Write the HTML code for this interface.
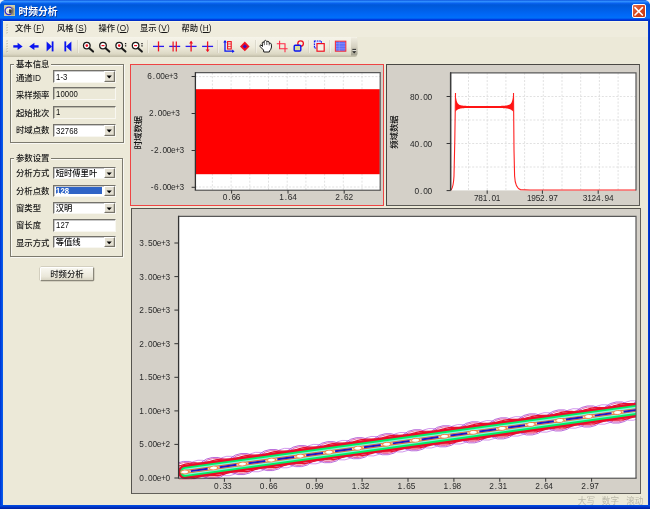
<!DOCTYPE html><html><head><meta charset="utf-8"><title>时频分析</title><style>
html,body{margin:0;padding:0;}
body{width:650px;height:509px;overflow:hidden;background:#ece9d8;position:relative;font-family:"Liberation Sans","Noto Sans CJK SC",sans-serif;font-size:8px;color:#1a1a1a;}
.a{position:absolute;}
.t{position:absolute;white-space:nowrap;line-height:10px;height:10px;}
#title{left:0;top:0;width:650px;height:21px;background:linear-gradient(to bottom,#1058e0 0px,#3090ff 1.6px,#0a62f0 3.2px,#0058d8 5px,#0060e8 10px,#0068f8 15px,#0070f8 18px,#0038e0 19.6px,#0030c8 20.5px);}
#lb{left:0;top:20px;width:3px;height:489px;background:linear-gradient(to right,#0030d0,#0050e8 60%,#1060e8);}
#rb{left:647.5px;top:20px;width:2.5px;height:489px;background:linear-gradient(to right,#0040e0,#0028b0);}
#bb{left:0;top:505.3px;width:650px;height:3.7px;background:linear-gradient(to bottom,#0050e8,#0030c0 60%,#001f9c);}
.lbl{font-size:8px;color:#151515;font-weight:500;}
.num{font-family:"Liberation Sans",sans-serif;color:#222;}
.panel{position:absolute;background:#d4d0c8;}
.combo{position:absolute;background:#fff;border:1.1px solid #74726b;border-right-color:#f8f7f1;border-bottom-color:#f8f7f1;box-sizing:border-box;box-shadow:inset 0.5px 0.5px 0 rgba(60,60,60,.55);}
.dd{position:absolute;right:0;top:0;bottom:0;width:11.4px;background:#e4e0d2;border:0.8px solid #fff;border-right-color:#77746a;border-bottom-color:#77746a;box-sizing:border-box;box-shadow:inset -0.6px -0.6px 0 #b5b2a5;}
.ro{background:#ece9d8;}
.grp{position:absolute;border:1px solid #7c7a6e;box-sizing:border-box;box-shadow:0.7px 0.7px 0 #fff, inset 0.7px 0.7px 0 #fff;}
.gt{position:absolute;background:#ece9d8;padding:0 1.5px;}
</style></head><body><div id="w" style="position:absolute;left:0;top:0;width:650px;height:509px;will-change:transform"><div class="a" id="title"></div>
<div class="a" style="left:0;top:20.5px;width:650px;height:1.5px;background:#f8f8e4"></div>
<div class="a" style="left:3px;top:22px;width:644.5px;height:15px;background:#efecdd"></div>
<div class="a" style="left:3px;top:37px;width:354px;height:19.5px;background:linear-gradient(to bottom,#f6f4ea 0,#eeebdc 50%,#dcd8c4 85%,#bfbba6 100%);border-radius:0 0 2px 0"></div>
<div class="a" id="lb"></div><div class="a" id="rb"></div><div class="a" id="bb"></div>
<svg class="a" style="left:0;top:0" width="650" height="8"><path d="M0 0h4.5C2 0.8 0.8 2 0 4.5z" fill="#e8eef8"/><path d="M650 0h-4.5c2.5 .8 3.7 2 4.5 4.5z" fill="#e8eef8"/></svg>
<svg class="a" style="left:3.7px;top:5px" width="11.3" height="11.2" viewBox="0 0 13 13"><rect x="0" y="0" width="13" height="13" rx="1" fill="#d8d3b0"/><rect x="0.5" y="0.5" width="12" height="12" fill="#cfc9a4"/><circle cx="5.6" cy="6.8" r="4.4" fill="#f4f0d0" stroke="#2a28d8" stroke-width="1.5"/><circle cx="7" cy="7.4" r="2.6" fill="#3a3a48"/><path d="M5 3.4 L5.4 9.6" stroke="#fff" stroke-width="1"/><path d="M9 2 L12 4 L12 12 L8 12" fill="#8a8460" opacity=".7"/></svg>
<div class="t" style="left:18.6px;top:6px;font-size:9.8px;font-weight:700;color:#fff;line-height:11px;height:11px;letter-spacing:-0.1px;text-shadow:0.6px 0.6px 0.5px #0a2a80">时频分析</div>
<div class="a" style="left:632px;top:4px;width:13.5px;height:14px;border-radius:2px;background:linear-gradient(135deg,#e8704c,#d8461c 50%,#c03a12);border:0.8px solid #fff;box-sizing:border-box"></div>
<svg class="a" style="left:632px;top:4px" width="14" height="14"><path d="M3 3.6 L10.4 11 M10.4 3.6 L3 11" stroke="#fff" stroke-width="1.6" stroke-linecap="round"/></svg>
<svg class="a" style="left:0;top:0" width="20" height="60"><rect x="6.5" y="24.5" width="1.3" height="1.3" fill="#b8b4a0"/><rect x="7.4" y="25.4" width="0.8" height="0.8" fill="#fff"/><rect x="6.5" y="27.1" width="1.3" height="1.3" fill="#b8b4a0"/><rect x="7.4" y="28.0" width="0.8" height="0.8" fill="#fff"/><rect x="6.5" y="29.7" width="1.3" height="1.3" fill="#b8b4a0"/><rect x="7.4" y="30.6" width="0.8" height="0.8" fill="#fff"/><rect x="6.5" y="32.3" width="1.3" height="1.3" fill="#b8b4a0"/><rect x="7.4" y="33.2" width="0.8" height="0.8" fill="#fff"/><rect x="6.5" y="40.5" width="1.3" height="1.3" fill="#b8b4a0"/><rect x="7.4" y="41.4" width="0.8" height="0.8" fill="#fff"/><rect x="6.5" y="43.1" width="1.3" height="1.3" fill="#b8b4a0"/><rect x="7.4" y="44.0" width="0.8" height="0.8" fill="#fff"/><rect x="6.5" y="45.7" width="1.3" height="1.3" fill="#b8b4a0"/><rect x="7.4" y="46.6" width="0.8" height="0.8" fill="#fff"/><rect x="6.5" y="48.3" width="1.3" height="1.3" fill="#b8b4a0"/><rect x="7.4" y="49.2" width="0.8" height="0.8" fill="#fff"/><rect x="6.5" y="50.9" width="1.3" height="1.3" fill="#b8b4a0"/><rect x="7.4" y="51.8" width="0.8" height="0.8" fill="#fff"/></svg>
<div class="t lbl" style="left:15px;top:23.3px;font-size:8.3px"><span>文件</span><span style="font-size:8.2px;letter-spacing:0.25px;margin-left:1.6px">(<u>F</u>)</span></div>
<div class="t lbl" style="left:57px;top:23.3px;font-size:8.3px"><span>风格</span><span style="font-size:8.2px;letter-spacing:0.25px;margin-left:1.6px">(<u>S</u>)</span></div>
<div class="t lbl" style="left:98.5px;top:23.3px;font-size:8.3px"><span>操作</span><span style="font-size:8.2px;letter-spacing:0.25px;margin-left:1.6px">(<u>O</u>)</span></div>
<div class="t lbl" style="left:140px;top:23.3px;font-size:8.3px"><span>显示</span><span style="font-size:8.2px;letter-spacing:0.25px;margin-left:1.6px">(<u>V</u>)</span></div>
<div class="t lbl" style="left:181.5px;top:23.3px;font-size:8.3px"><span>帮助</span><span style="font-size:8.2px;letter-spacing:0.25px;margin-left:1.6px">(<u>H</u>)</span></div>
<svg class="a" style="left:0;top:0" width="365" height="60"><path d="M13.3 46.4 H19" stroke="#0a14f0" stroke-width="2.4"/><path d="M17.6 42.8 L22.6 46.4 L17.6 50.0 z" fill="#0a14f0"/><path d="M38.6 46.4 H33" stroke="#0a14f0" stroke-width="2.4"/><path d="M34.4 42.8 L29.2 46.4 L34.4 50.0 z" fill="#0a14f0"/><path d="M46.6 41.4 L52 46.4 L46.6 51.4 z" fill="#0a14f0"/><path d="M52.6 41.4 V51.4" stroke="#0a14f0" stroke-width="1.8"/><path d="M71.4 41.4 L66 46.4 L71.4 51.4 z" fill="#0a14f0"/><path d="M65.3 41.4 V51.4" stroke="#0a14f0" stroke-width="1.8"/><path d="M77.7 40 V53" stroke="#cfccbc" stroke-width="0.8"/><path d="M78.4 40 V53" stroke="#fbfaf4" stroke-width="0.6"/><circle cx="86.8" cy="45.6" r="3.3" fill="#fff" stroke="#1a1a1a" stroke-width="1.3"/><path d="M89.4 48.2 L93.1 51.6" stroke="#1a1a1a" stroke-width="2" stroke-linecap="round"/><circle cx="86.8" cy="45.6" r="1.3" fill="#f01020"/><circle cx="103.0" cy="45.6" r="3.3" fill="#fff" stroke="#1a1a1a" stroke-width="1.3"/><path d="M105.6 48.2 L109.3 51.6" stroke="#1a1a1a" stroke-width="2" stroke-linecap="round"/><path d="M101.5 45.6 h3" stroke="#f01020" stroke-width="1.2"/><circle cx="119.2" cy="45.6" r="3.3" fill="#fff" stroke="#1a1a1a" stroke-width="1.3"/><path d="M121.8 48.2 L125.5 51.6" stroke="#1a1a1a" stroke-width="2" stroke-linecap="round"/><circle cx="119.2" cy="45.6" r="1.3" fill="#f01020"/><path d="M125.6 43 v1.3 M125.6 45.3 v1.3" stroke="#1a1a1a" stroke-width="1.3"/><circle cx="135.6" cy="45.6" r="3.3" fill="#fff" stroke="#1a1a1a" stroke-width="1.3"/><path d="M138.2 48.2 L141.9 51.6" stroke="#1a1a1a" stroke-width="2" stroke-linecap="round"/><path d="M134.1 45.6 h3" stroke="#f01020" stroke-width="1.2"/><path d="M142.0 43 v1.3 M142.0 45.3 v1.3" stroke="#1a1a1a" stroke-width="1.3"/><path d="M147.8 40 V53" stroke="#cfccbc" stroke-width="0.8"/><path d="M148.5 40 V53" stroke="#fbfaf4" stroke-width="0.6"/><path d="M153.0 46.4 h11" stroke="#2a1af0" stroke-width="1.3"/><path d="M158.5 41.4 v10" stroke="#f01020" stroke-width="1.3"/><path d="M169.2 46.4 h11" stroke="#2a1af0" stroke-width="1.3"/><path d="M173.1 41.4 v10 M176.3 41.4 v10" stroke="#f01020" stroke-width="1.2"/><path d="M185.6 46.4 h11" stroke="#2a1af0" stroke-width="1.3"/><path d="M191.1 41.4 v10" stroke="#f01020" stroke-width="1.3"/><path d="M191.1 40.8 l2 2.6 h-4 z" fill="#f01020"/><path d="M202.1 46.4 h11" stroke="#2a1af0" stroke-width="1.3"/><path d="M207.6 41.4 v10" stroke="#f01020" stroke-width="1.3"/><path d="M207.6 52.0 l2 -2.6 h-4 z" fill="#f01020"/><path d="M217.8 40 V53" stroke="#cfccbc" stroke-width="0.8"/><path d="M218.5 40 V53" stroke="#fbfaf4" stroke-width="0.6"/><path d="M225 41.5 V51.2 H233" fill="none" stroke="#0a14f0" stroke-width="1.3"/><path d="M225 40 l1.8 2.4 h-3.6z M234.6 51.2 l-2.4 1.8 v-3.6z" fill="#0a14f0"/><rect x="227.6" y="41.6" width="3.6" height="7.4" fill="none" stroke="#f01020" stroke-width="1.1"/><path d="M227.6 44 h3.6 M227.6 46.5 h3.6" stroke="#f01020" stroke-width=".7"/><path d="M244.8 41.6 L249.6 46.4 L244.8 51.2 L240 46.4 z" fill="#f01020"/><path d="M244.8 44.2 L247 46.4 L244.8 48.6 L242.6 46.4 z" fill="#3a10c0"/><path d="M255.5 40 V53" stroke="#cfccbc" stroke-width="0.8"/><path d="M256.2 40 V53" stroke="#fbfaf4" stroke-width="0.6"/><path d="M263.8 52 L263.5 50 L260.2 46.7 Q259.4 45.2 260.9 44.9 L262.5 46.5 L262.2 42.7 Q262.9 41.3 263.9 42.4 L264.3 41 Q265.4 39.7 266.5 41 L266.9 41.7 Q267.9 40.6 268.9 41.9 L269.4 43.3 Q270.7 42.6 271.3 44.1 L271.5 47 Q271.1 49.6 269.5 51 L269.3 52 Z" fill="#fff" stroke="#1a1a1a" stroke-width="1" stroke-linejoin="round"/><path d="M264.3 42 V45.2 M266.8 41.8 V45 M269.2 43 V45.4" stroke="#1a1a1a" stroke-width=".7"/><path d="M279.6 40.8 V48.8 H287.6 M276.8 43.8 H285 V52.2" fill="none" stroke="#ff2848" stroke-width="1.1"/><circle cx="300.6" cy="43.6" r="2.8" fill="none" stroke="#f01020" stroke-width="1.3"/><rect x="294.2" y="45.2" width="6.6" height="5.8" rx="1" fill="#d8dca0" stroke="#0a14f0" stroke-width="1.4"/><path d="M308.6 40 V53" stroke="#cfccbc" stroke-width="0.8"/><path d="M309.3 40 V53" stroke="#fbfaf4" stroke-width="0.6"/><rect x="314.4" y="41" width="7" height="7" fill="#dfe4ff" stroke="#0a14f0" stroke-width="1.1" stroke-dasharray="1.6 0.8"/><rect x="317" y="43.6" width="7.2" height="7.6" fill="#f4f2e8" stroke="#f01020" stroke-width="1.2"/><path d="M329.8 40 V53" stroke="#cfccbc" stroke-width="0.8"/><path d="M330.5 40 V53" stroke="#fbfaf4" stroke-width="0.6"/><rect x="335.4" y="41.2" width="10.4" height="10" fill="#7f8cff" stroke="#f23040" stroke-width="1.1"/><path d="M336 43.6 h9.2 M336 46.2 h9.2 M336 48.8 h9.2" stroke="#dfe3ff" stroke-width=".6"/><path d="M339.2 41.8 v8.8" stroke="#e8ebff" stroke-width=".6"/><rect x="336.2" y="42" width="8.8" height="8.4" fill="#3a48f0" opacity=".45"/><defs><linearGradient id="cg" x1="0" y1="0" x2="0" y2="1"><stop offset="0" stop-color="#efece0"/><stop offset=".5" stop-color="#d6d2c2"/><stop offset="1" stop-color="#a29f8e"/></linearGradient></defs><path d="M351 37.5 H355.5 Q357.6 37.5 357.6 39.6 V53.4 Q357.6 55.6 355.5 55.6 H351 Z" fill="url(#cg)"/><path d="M352.4 49.4 h3.6" stroke="#222" stroke-width="1"/><path d="M352.8 50.4 h3.6" stroke="#fff" stroke-width=".6"/><path d="M352.2 51.2 h4 l-2 2.3z" fill="#222"/></svg>
<div class="grp" style="left:10.2px;top:64.4px;width:113.4px;height:78.2px"></div>
<div class="t lbl gt" style="left:14.4px;top:59.2px;font-size:8.4px">基本信息</div>
<div class="grp" style="left:10.2px;top:158.2px;width:113.2px;height:98.5px"></div>
<div class="t lbl gt" style="left:14.4px;top:153.0px;font-size:8.4px">参数设置</div>
<div class="t lbl" style="left:16.0px;top:73.0px;font-size:8.4px">通道ID</div>
<div class="combo" style="left:53.4px;top:70.4px;width:62.6px;height:12.4px"><div class="t" style="left:1.3px;top:0.2px;font-size:9px;font-weight:500;transform:scaleX(.86);transform-origin:0 50%;letter-spacing:0.1px;color:#0c0c0c">1-3</div><div class="dd"><svg style="position:absolute;left:0;top:0" width="10" height="10.2" viewBox="0 0 10 10.2"><path d="M1.6 3.60 h5.2 l-2.6 2.8z" fill="#000"/></svg></div></div>
<div class="t lbl" style="left:16.0px;top:90.4px;font-size:8.4px">采样频率</div>
<div class="combo ro" style="left:53.4px;top:87.4px;width:62.6px;height:13.0px"><div class="t" style="left:1.3px;top:0.5px;font-size:9px;font-weight:500;transform:scaleX(.86);transform-origin:0 50%;letter-spacing:0.1px;color:#0c0c0c">10000</div></div>
<div class="t lbl" style="left:16.0px;top:108.0px;font-size:8.4px">起始批次</div>
<div class="combo ro" style="left:53.4px;top:105.8px;width:62.6px;height:13.0px"><div class="t" style="left:1.3px;top:0.5px;font-size:9px;font-weight:500;transform:scaleX(.86);transform-origin:0 50%;letter-spacing:0.1px;color:#0c0c0c">1</div></div>
<div class="t lbl" style="left:16.0px;top:125.4px;font-size:8.4px">时域点数</div>
<div class="combo" style="left:53.4px;top:124.4px;width:62.6px;height:12.4px"><div class="t" style="left:1.3px;top:0.2px;font-size:9px;font-weight:500;transform:scaleX(.86);transform-origin:0 50%;letter-spacing:0.1px;color:#0c0c0c">32768</div><div class="dd"><svg style="position:absolute;left:0;top:0" width="10" height="10.2" viewBox="0 0 10 10.2"><path d="M1.6 3.60 h5.2 l-2.6 2.8z" fill="#000"/></svg></div></div>
<div class="t lbl" style="left:16.0px;top:168.4px;font-size:8.4px">分析方式</div>
<div class="combo" style="left:53.4px;top:167.2px;width:62.6px;height:12.1px"><div class="t" style="left:1.3px;top:0.3px;font-size:8.3px;font-weight:500;color:#0c0c0c">短时傅里叶</div><div class="dd"><svg style="position:absolute;left:0;top:0" width="10" height="9.9" viewBox="0 0 10 9.9"><path d="M1.6 3.45 h5.2 l-2.6 2.8z" fill="#000"/></svg></div></div>
<div class="t lbl" style="left:16.0px;top:185.6px;font-size:8.4px">分析点数</div>
<div class="combo" style="left:53.4px;top:184.5px;width:62.6px;height:12.1px"><div class="a" style="left:1.2px;top:1.4px;width:46.6px;bottom:1.2px;background:#2f64c6"></div><div class="t" style="left:1.3px;top:0.0px;font-size:9px;font-weight:700;transform:scaleX(.86);transform-origin:0 50%;letter-spacing:0.1px;color:#fff">128</div><div class="dd"><svg style="position:absolute;left:0;top:0" width="10" height="9.9" viewBox="0 0 10 9.9"><path d="M1.6 3.45 h5.2 l-2.6 2.8z" fill="#000"/></svg></div></div>
<div class="t lbl" style="left:16.0px;top:203.0px;font-size:8.4px">窗类型</div>
<div class="combo" style="left:53.4px;top:201.9px;width:62.6px;height:12.1px"><div class="t" style="left:1.3px;top:0.2px;font-size:8.3px;font-weight:500;color:#0c0c0c">汉明</div><div class="dd"><svg style="position:absolute;left:0;top:0" width="10" height="9.9" viewBox="0 0 10 9.9"><path d="M1.6 3.45 h5.2 l-2.6 2.8z" fill="#000"/></svg></div></div>
<div class="t lbl" style="left:16.0px;top:220.4px;font-size:8.4px">窗长度</div>
<div class="combo" style="left:53.4px;top:219.2px;width:62.6px;height:12.4px"><div class="t" style="left:1.3px;top:0.2px;font-size:9px;font-weight:500;transform:scaleX(.86);transform-origin:0 50%;letter-spacing:0.1px;color:#0c0c0c">127</div></div>
<div class="t lbl" style="left:16.0px;top:237.6px;font-size:8.4px">显示方式</div>
<div class="combo" style="left:53.4px;top:236.2px;width:62.6px;height:12.1px"><div class="t" style="left:1.3px;top:0.3px;font-size:8.3px;font-weight:500;color:#0c0c0c">等值线</div><div class="dd"><svg style="position:absolute;left:0;top:0" width="10" height="9.9" viewBox="0 0 10 9.9"><path d="M1.6 3.45 h5.2 l-2.6 2.8z" fill="#000"/></svg></div></div>
<div class="a" style="left:39.8px;top:266.8px;width:54.4px;height:13.8px;box-sizing:border-box;border:0.8px solid #fff;border-right-color:#8a877a;border-bottom-color:#8a877a;border-radius:1.5px;background:linear-gradient(#f8f7f0,#ebe8da 70%,#d9d5c4);box-shadow:0 0 0 0.5px #b9b6a6"></div>
<div class="t lbl" style="left:39.8px;width:54.4px;text-align:center;top:268.6px;font-size:8.4px">时频分析</div>
<div class="t" style="left:577.8px;top:495.6px;font-size:8.6px;color:#b9b7a8;word-spacing:0">大写</div>
<div class="t" style="left:601.8px;top:495.6px;font-size:8.6px;color:#b9b7a8">数字</div>
<div class="t" style="left:626.2px;top:495.6px;font-size:8.6px;color:#b9b7a8">滚动</div>
<div class="panel" style="left:130.4px;top:64.3px;width:253.8px;height:141.6px;box-sizing:border-box;border:1.1px solid #ee4444"></div>
<div class="panel" style="left:385.8px;top:64.1px;width:254.6px;height:142.2px;box-sizing:border-box;border:1.4px solid #4a4844;border-right-color:#5c5a55;border-bottom-color:#5c5a55"></div>
<div class="panel" style="left:130.6px;top:207.6px;width:510.5px;height:286.4px;box-sizing:border-box;border:1.5px solid #55534e;border-right-color:#62605a;border-bottom-color:#62605a"></div>
<svg class="a" style="left:0;top:0;font-family:'Liberation Sans','Noto Sans CJK SC',sans-serif" width="650" height="509"><rect x="195.4" y="72.7" width="184.8" height="117.5" fill="#fff"/><path d="M212.4 72.7 V190.2" stroke="#d9d9d9" stroke-width="0.8" stroke-dasharray="2 1.6"/><path d="M231.1 72.7 V190.2" stroke="#d9d9d9" stroke-width="0.8" stroke-dasharray="2 1.6"/><path d="M249.8 72.7 V190.2" stroke="#d9d9d9" stroke-width="0.8" stroke-dasharray="2 1.6"/><path d="M268.5 72.7 V190.2" stroke="#d9d9d9" stroke-width="0.8" stroke-dasharray="2 1.6"/><path d="M287.2 72.7 V190.2" stroke="#d9d9d9" stroke-width="0.8" stroke-dasharray="2 1.6"/><path d="M305.9 72.7 V190.2" stroke="#d9d9d9" stroke-width="0.8" stroke-dasharray="2 1.6"/><path d="M324.6 72.7 V190.2" stroke="#d9d9d9" stroke-width="0.8" stroke-dasharray="2 1.6"/><path d="M343.3 72.7 V190.2" stroke="#d9d9d9" stroke-width="0.8" stroke-dasharray="2 1.6"/><path d="M362.0 72.7 V190.2" stroke="#d9d9d9" stroke-width="0.8" stroke-dasharray="2 1.6"/><path d="M195.4 76.6 H380.2" stroke="#d9d9d9" stroke-width="0.8" stroke-dasharray="2 1.6"/><path d="M195.4 187.0 H380.2" stroke="#d9d9d9" stroke-width="0.8" stroke-dasharray="2 1.6"/><rect x="195.8" y="89.2" width="184.0" height="85" fill="#ff0000"/><path d="M195.4 72.7 H380.2 V190.2" fill="none" stroke="#585858" stroke-width="1.2"/><path d="M195.4 190.2 V72.1" fill="none" stroke="#333" stroke-width="1.3"/><path d="M194.8 190.2 H380.8" stroke="#3c3c3c" stroke-width="1"/><text x="149.57 153.91 158.26 162.60 166.94 171.29 175.63" y="79.0" text-anchor="middle" font-size="8.3" fill="#2a2a2a">6.00e+3</text><path d="M191.6 76.5 H195.4" stroke="#333" stroke-width="1"/><text x="151.39 155.76 160.13 164.50 168.87 173.24 177.61" y="116.0" text-anchor="middle" font-size="8.3" fill="#2a2a2a">2.00e+3</text><path d="M191.6 113.5 H195.4" stroke="#333" stroke-width="1"/><text x="152.12 156.38 160.62 164.88 169.12 173.38 177.62 181.88" y="153.0" text-anchor="middle" font-size="8.3" fill="#2a2a2a">-2.00e+3</text><path d="M191.6 150.5 H195.4" stroke="#333" stroke-width="1"/><text x="152.11 156.34 160.56 164.79 169.01 173.24 177.46 181.69" y="189.8" text-anchor="middle" font-size="8.3" fill="#2a2a2a">-6.00e+3</text><path d="M191.6 187.3 H195.4" stroke="#333" stroke-width="1"/><text x="225.06 229.42 233.78 238.14" y="200.0" text-anchor="middle" font-size="8.3" fill="#2a2a2a">0.66</text><path d="M231.6 190.2 V193.6" stroke="#333" stroke-width="1"/><text x="281.46 285.82 290.18 294.54" y="200.0" text-anchor="middle" font-size="8.3" fill="#2a2a2a">1.64</text><path d="M288.0 190.2 V193.6" stroke="#333" stroke-width="1"/><text x="337.66 342.02 346.38 350.74" y="200.0" text-anchor="middle" font-size="8.3" fill="#2a2a2a">2.62</text><path d="M344.2 190.2 V193.6" stroke="#333" stroke-width="1"/><text transform="translate(141.4,132.6) rotate(-90)" text-anchor="middle" font-size="8.4" font-weight="500" fill="#111">时域数据</text><rect x="450.6" y="72.8" width="185.4" height="117.6" fill="#fff"/><path d="M468.5 72.8 V190.4" stroke="#d9d9d9" stroke-width="0.8" stroke-dasharray="2 1.6"/><path d="M487.2 72.8 V190.4" stroke="#d9d9d9" stroke-width="0.8" stroke-dasharray="2 1.6"/><path d="M505.9 72.8 V190.4" stroke="#d9d9d9" stroke-width="0.8" stroke-dasharray="2 1.6"/><path d="M524.6 72.8 V190.4" stroke="#d9d9d9" stroke-width="0.8" stroke-dasharray="2 1.6"/><path d="M543.3 72.8 V190.4" stroke="#d9d9d9" stroke-width="0.8" stroke-dasharray="2 1.6"/><path d="M562.0 72.8 V190.4" stroke="#d9d9d9" stroke-width="0.8" stroke-dasharray="2 1.6"/><path d="M580.7 72.8 V190.4" stroke="#d9d9d9" stroke-width="0.8" stroke-dasharray="2 1.6"/><path d="M599.4 72.8 V190.4" stroke="#d9d9d9" stroke-width="0.8" stroke-dasharray="2 1.6"/><path d="M618.1 72.8 V190.4" stroke="#d9d9d9" stroke-width="0.8" stroke-dasharray="2 1.6"/><path d="M450.6 96.5 H636.0" stroke="#d9d9d9" stroke-width="0.8" stroke-dasharray="2 1.6"/><path d="M450.6 120.0 H636.0" stroke="#d9d9d9" stroke-width="0.8" stroke-dasharray="2 1.6"/><path d="M450.6 143.5 H636.0" stroke="#d9d9d9" stroke-width="0.8" stroke-dasharray="2 1.6"/><path d="M450.6 167.0 H636.0" stroke="#d9d9d9" stroke-width="0.8" stroke-dasharray="2 1.6"/><path d="M455.40 92.20 L455.65 94.73 L455.90 96.73 L456.15 98.33 L456.40 99.61 L456.65 100.64 L456.90 101.47 L457.15 102.14 L457.40 102.69 L457.65 103.14 L457.90 103.51 L458.15 103.82 L458.40 104.08 L458.65 104.30 L458.90 104.49 L459.15 104.64 L459.40 104.78 L459.65 104.90 L459.90 105.00 L460.15 105.10 L460.40 105.18 L460.65 105.25 L460.90 105.31 L461.15 105.37 L461.40 105.42 L461.65 105.47 L461.90 105.51 L462.15 105.55 L462.40 105.59 L462.65 105.62 L462.90 105.65 L463.15 105.68 L463.40 105.70 L463.65 105.72 L463.90 105.75 L464.15 105.76 L464.40 105.78 L464.65 105.80 L464.90 105.81 L465.15 105.83 L465.40 105.84 L465.65 105.85 L465.90 105.86 L466.15 105.87 L466.40 105.88 L466.65 105.89 L466.90 105.90 L467.15 105.91 L467.40 105.92 L467.65 105.92 L467.90 105.93 L468.15 105.93 L468.40 105.94 L468.65 105.94 L468.90 105.95 L469.15 105.95 L469.40 105.95 L469.65 105.96 L469.90 105.96 L470.15 105.96 L470.40 105.97 L470.65 105.97 L470.90 105.97 L471.15 105.97 L471.40 105.98 L471.65 105.98 L471.90 105.98 L472.15 105.98 L472.40 105.98 L472.65 105.98 L472.90 105.98 L473.15 105.99 L473.40 105.99 L473.65 105.99 L473.90 105.99 L474.15 105.99 L474.40 105.99 L474.65 105.99 L474.90 105.99 L475.15 105.99 L475.40 105.99 L475.65 105.99 L475.90 105.99 L476.15 105.99 L476.40 105.99 L476.65 106.00 L476.90 106.00 L477.15 106.00 L477.40 106.00 L477.65 106.00 L477.90 106.00 L478.15 106.00 L478.40 106.00 L478.65 106.00 L478.90 106.00 L479.15 106.00 L479.40 106.00 L479.65 106.00 L479.90 106.00 L480.15 106.00 L480.40 106.00 L480.65 106.00 L480.90 106.00 L481.15 106.00 L481.40 106.00 L481.65 106.00 L481.90 106.00 L482.15 106.00 L482.40 106.00 L482.65 106.00 L482.90 106.00 L483.15 106.00 L483.40 106.00 L483.65 106.00 L483.90 106.00 L484.15 106.00 L484.40 106.00 L484.65 106.00 L484.90 106.00 L485.15 106.00 L485.40 106.00 L485.65 106.00 L485.90 106.00 L486.15 106.00 L486.40 106.00 L486.65 106.00 L486.90 106.00 L487.15 106.00 L487.40 106.00 L487.65 106.00 L487.90 106.00 L488.15 106.00 L488.40 106.00 L488.65 106.00 L488.90 106.00 L489.15 106.00 L489.40 106.00 L489.65 106.00 L489.90 105.99 L490.15 105.99 L490.40 105.99 L490.65 105.99 L490.90 105.99 L491.15 105.99 L491.40 105.99 L491.65 105.99 L491.90 105.99 L492.15 105.99 L492.40 105.99 L492.65 105.99 L492.90 105.99 L493.15 105.99 L493.40 105.99 L493.65 105.99 L493.90 105.98 L494.15 105.98 L494.40 105.98 L494.65 105.98 L494.90 105.98 L495.15 105.98 L495.40 105.98 L495.65 105.97 L495.90 105.97 L496.15 105.97 L496.40 105.97 L496.65 105.97 L496.90 105.96 L497.15 105.96 L497.40 105.96 L497.65 105.95 L497.90 105.95 L498.15 105.95 L498.40 105.94 L498.65 105.94 L498.90 105.94 L499.15 105.93 L499.40 105.93 L499.65 105.92 L499.90 105.92 L500.15 105.91 L500.40 105.90 L500.65 105.90 L500.90 105.89 L501.15 105.88 L501.40 105.87 L501.65 105.86 L501.90 105.85 L502.15 105.84 L502.40 105.83 L502.65 105.82 L502.90 105.81 L503.15 105.79 L503.40 105.78 L503.65 105.76 L503.90 105.74 L504.15 105.72 L504.40 105.70 L504.65 105.68 L504.90 105.66 L505.15 105.63 L505.40 105.61 L505.65 105.58 L505.90 105.55 L506.15 105.51 L506.40 105.48 L506.65 105.44 L506.90 105.39 L507.15 105.35 L507.40 105.30 L507.65 105.24 L507.90 105.18 L508.15 105.11 L508.40 105.04 L508.65 104.96 L508.90 104.86 L509.15 104.76 L509.40 104.64 L509.65 104.51 L509.90 104.35 L510.15 104.17 L510.40 103.96 L510.65 103.72 L510.90 103.43 L511.15 103.07 L511.40 102.65 L511.65 102.14 L511.90 101.51 L512.15 100.74 L512.40 99.78 L512.65 98.60 L512.90 97.11 L513.15 95.25 L513.40 92.91 L513.40 111.93 L513.15 111.61 L512.90 111.33 L512.65 111.06 L512.40 110.82 L512.15 110.59 L511.90 110.38 L511.65 110.19 L511.40 110.02 L511.15 109.86 L510.90 109.71 L510.65 109.57 L510.40 109.45 L510.15 109.33 L509.90 109.22 L509.65 109.13 L509.40 109.04 L509.15 108.95 L508.90 108.88 L508.65 108.81 L508.40 108.74 L508.15 108.68 L507.90 108.63 L507.65 108.58 L507.40 108.53 L507.15 108.49 L506.90 108.45 L506.65 108.41 L506.40 108.38 L506.15 108.35 L505.90 108.32 L505.65 108.30 L505.40 108.27 L505.15 108.25 L504.90 108.23 L504.65 108.21 L504.40 108.20 L504.15 108.18 L503.90 108.17 L503.65 108.15 L503.40 108.14 L503.15 108.13 L502.90 108.12 L502.65 108.11 L502.40 108.10 L502.15 108.09 L501.90 108.09 L501.65 108.08 L501.40 108.07 L501.15 108.07 L500.90 108.06 L500.65 108.06 L500.40 108.05 L500.15 108.05 L499.90 108.04 L499.65 108.04 L499.40 108.04 L499.15 108.03 L498.90 108.03 L498.65 108.03 L498.40 108.03 L498.15 108.02 L497.90 108.02 L497.65 108.02 L497.40 108.02 L497.15 108.02 L496.90 108.02 L496.65 108.01 L496.40 108.01 L496.15 108.01 L495.90 108.01 L495.65 108.01 L495.40 108.01 L495.15 108.01 L494.90 108.01 L494.65 108.01 L494.40 108.01 L494.15 108.01 L493.90 108.01 L493.65 108.01 L493.40 108.01 L493.15 108.00 L492.90 108.00 L492.65 108.00 L492.40 108.00 L492.15 108.00 L491.90 108.00 L491.65 108.00 L491.40 108.00 L491.15 108.00 L490.90 108.00 L490.65 108.00 L490.40 108.00 L490.15 108.00 L489.90 108.00 L489.65 108.00 L489.40 108.00 L489.15 108.00 L488.90 108.00 L488.65 108.00 L488.40 108.00 L488.15 108.00 L487.90 108.00 L487.65 108.00 L487.40 108.00 L487.15 108.00 L486.90 108.00 L486.65 108.00 L486.40 108.00 L486.15 108.00 L485.90 108.00 L485.65 108.00 L485.40 108.00 L485.15 108.00 L484.90 108.00 L484.65 108.00 L484.40 108.00 L484.15 108.00 L483.90 108.00 L483.65 108.00 L483.40 108.00 L483.15 108.00 L482.90 108.00 L482.65 108.00 L482.40 108.00 L482.15 108.00 L481.90 108.00 L481.65 108.00 L481.40 108.00 L481.15 108.00 L480.90 108.00 L480.65 108.00 L480.40 108.00 L480.15 108.00 L479.90 108.00 L479.65 108.00 L479.40 108.00 L479.15 108.00 L478.90 108.00 L478.65 108.00 L478.40 108.00 L478.15 108.00 L477.90 108.00 L477.65 108.00 L477.40 108.00 L477.15 108.00 L476.90 108.00 L476.65 108.00 L476.40 108.00 L476.15 108.00 L475.90 108.00 L475.65 108.00 L475.40 108.00 L475.15 108.00 L474.90 108.00 L474.65 108.00 L474.40 108.00 L474.15 108.00 L473.90 108.00 L473.65 108.00 L473.40 108.00 L473.15 108.00 L472.90 108.00 L472.65 108.00 L472.40 108.01 L472.15 108.01 L471.90 108.01 L471.65 108.01 L471.40 108.01 L471.15 108.01 L470.90 108.01 L470.65 108.01 L470.40 108.01 L470.15 108.01 L469.90 108.01 L469.65 108.02 L469.40 108.02 L469.15 108.02 L468.90 108.02 L468.65 108.02 L468.40 108.03 L468.15 108.03 L467.90 108.03 L467.65 108.03 L467.40 108.04 L467.15 108.04 L466.90 108.05 L466.65 108.05 L466.40 108.06 L466.15 108.06 L465.90 108.07 L465.65 108.07 L465.40 108.08 L465.15 108.09 L464.90 108.10 L464.65 108.11 L464.40 108.12 L464.15 108.13 L463.90 108.14 L463.65 108.16 L463.40 108.18 L463.15 108.19 L462.90 108.21 L462.65 108.23 L462.40 108.26 L462.15 108.28 L461.90 108.31 L461.65 108.34 L461.40 108.38 L461.15 108.42 L460.90 108.46 L460.65 108.50 L460.40 108.56 L460.15 108.61 L459.90 108.67 L459.65 108.74 L459.40 108.82 L459.15 108.90 L458.90 108.99 L458.65 109.09 L458.40 109.20 L458.15 109.32 L457.90 109.45 L457.65 109.60 L457.40 109.76 L457.15 109.94 L456.90 110.13 L456.65 110.35 L456.40 110.59 L456.15 110.85 L455.90 111.14 L455.65 111.45 L455.40 111.80z" fill="#ff1414"/><path d="M451 190 C453 188 453.6 184 454 176 L454.8 140 L455.5 93" fill="none" stroke="#ff2020" stroke-width="1.1"/><path d="M513.5 93 L514 150 L514.6 176 C515 184 516.5 188.4 520.5 189.6 L530 190 H636" fill="none" stroke="#ff2020" stroke-width="1.1"/><path d="M450.6 72.8 H636.0 V190.4" fill="none" stroke="#585858" stroke-width="1.2"/><path d="M450.6 190.4 V72.2" fill="none" stroke="#333" stroke-width="1.3"/><path d="M450.6 72.8 V190.4" stroke="#3c3c3c" stroke-width="1.3"/><text x="412.38 416.74 421.10 425.46 429.82" y="99.5" text-anchor="middle" font-size="8.3" fill="#2a2a2a">80.00</text><path d="M446.6 96.5 H450.6" stroke="#333" stroke-width="1"/><text x="412.38 416.74 421.10 425.46 429.82" y="146.5" text-anchor="middle" font-size="8.3" fill="#2a2a2a">40.00</text><path d="M446.6 143.5 H450.6" stroke="#333" stroke-width="1"/><text x="416.74 421.10 425.46 429.82" y="193.6" text-anchor="middle" font-size="8.3" fill="#2a2a2a">0.00</text><path d="M446.6 190.6 H450.6" stroke="#333" stroke-width="1"/><text x="476.30 480.66 485.02 489.38 493.74 498.10" y="200.6" text-anchor="middle" font-size="8.3" fill="#2a2a2a">781.01</text><path d="M487.2 190.4 V193.8" stroke="#333" stroke-width="1"/><text x="529.32 533.68 538.04 542.40 546.76 551.12 555.48" y="200.6" text-anchor="middle" font-size="8.3" fill="#2a2a2a">1952.97</text><path d="M542.4 190.4 V193.8" stroke="#333" stroke-width="1"/><text x="585.12 589.48 593.84 598.20 602.56 606.92 611.28" y="200.6" text-anchor="middle" font-size="8.3" fill="#2a2a2a">3124.94</text><path d="M598.2 190.4 V193.8" stroke="#333" stroke-width="1"/><text transform="translate(397,132) rotate(-90)" text-anchor="middle" font-size="8.4" font-weight="500" fill="#111">频域数据</text><rect x="178.6" y="216.3" width="457.4" height="261.9" fill="#fff"/><clipPath id="cp"><rect x="178.6" y="216.3" width="457.4" height="262.9"/></clipPath><g clip-path="url(#cp)" fill="none" stroke-linecap="round"><path d="M185.20 471.90 L642.00 409.14" stroke="#e2b8f2" stroke-width="16" opacity=".55"/><ellipse cx="184.80" cy="471.95" rx="15.5" ry="10.6" transform="rotate(-7.82 184.80 471.95)" stroke="#a23cd0" stroke-width=".8" opacity=".9"/><ellipse cx="184.80" cy="471.95" rx="13.5" ry="9.4" transform="rotate(-7.82 184.80 471.95)" stroke="#d83088" stroke-width=".8" opacity=".85"/><ellipse cx="199.23" cy="469.97" rx="13" ry="9.8" transform="rotate(-7.82 199.23 469.97)" stroke="#b050e0" stroke-width=".7" opacity=".8"/><ellipse cx="213.65" cy="467.99" rx="15.5" ry="10.6" transform="rotate(-7.82 213.65 467.99)" stroke="#a23cd0" stroke-width=".8" opacity=".9"/><ellipse cx="213.65" cy="467.99" rx="13.5" ry="9.4" transform="rotate(-7.82 213.65 467.99)" stroke="#d83088" stroke-width=".8" opacity=".85"/><ellipse cx="228.08" cy="466.01" rx="13" ry="9.8" transform="rotate(-7.82 228.08 466.01)" stroke="#b050e0" stroke-width=".7" opacity=".8"/><ellipse cx="242.50" cy="464.03" rx="15.5" ry="10.6" transform="rotate(-7.82 242.50 464.03)" stroke="#a23cd0" stroke-width=".8" opacity=".9"/><ellipse cx="242.50" cy="464.03" rx="13.5" ry="9.4" transform="rotate(-7.82 242.50 464.03)" stroke="#d83088" stroke-width=".8" opacity=".85"/><ellipse cx="256.93" cy="462.04" rx="13" ry="9.8" transform="rotate(-7.82 256.93 462.04)" stroke="#b050e0" stroke-width=".7" opacity=".8"/><ellipse cx="271.35" cy="460.06" rx="15.5" ry="10.6" transform="rotate(-7.82 271.35 460.06)" stroke="#a23cd0" stroke-width=".8" opacity=".9"/><ellipse cx="271.35" cy="460.06" rx="13.5" ry="9.4" transform="rotate(-7.82 271.35 460.06)" stroke="#d83088" stroke-width=".8" opacity=".85"/><ellipse cx="285.78" cy="458.08" rx="13" ry="9.8" transform="rotate(-7.82 285.78 458.08)" stroke="#b050e0" stroke-width=".7" opacity=".8"/><ellipse cx="300.20" cy="456.10" rx="15.5" ry="10.6" transform="rotate(-7.82 300.20 456.10)" stroke="#a23cd0" stroke-width=".8" opacity=".9"/><ellipse cx="300.20" cy="456.10" rx="13.5" ry="9.4" transform="rotate(-7.82 300.20 456.10)" stroke="#d83088" stroke-width=".8" opacity=".85"/><ellipse cx="314.62" cy="454.12" rx="13" ry="9.8" transform="rotate(-7.82 314.62 454.12)" stroke="#b050e0" stroke-width=".7" opacity=".8"/><ellipse cx="329.05" cy="452.14" rx="15.5" ry="10.6" transform="rotate(-7.82 329.05 452.14)" stroke="#a23cd0" stroke-width=".8" opacity=".9"/><ellipse cx="329.05" cy="452.14" rx="13.5" ry="9.4" transform="rotate(-7.82 329.05 452.14)" stroke="#d83088" stroke-width=".8" opacity=".85"/><ellipse cx="343.48" cy="450.15" rx="13" ry="9.8" transform="rotate(-7.82 343.48 450.15)" stroke="#b050e0" stroke-width=".7" opacity=".8"/><ellipse cx="357.90" cy="448.17" rx="15.5" ry="10.6" transform="rotate(-7.82 357.90 448.17)" stroke="#a23cd0" stroke-width=".8" opacity=".9"/><ellipse cx="357.90" cy="448.17" rx="13.5" ry="9.4" transform="rotate(-7.82 357.90 448.17)" stroke="#d83088" stroke-width=".8" opacity=".85"/><ellipse cx="372.33" cy="446.19" rx="13" ry="9.8" transform="rotate(-7.82 372.33 446.19)" stroke="#b050e0" stroke-width=".7" opacity=".8"/><ellipse cx="386.75" cy="444.21" rx="15.5" ry="10.6" transform="rotate(-7.82 386.75 444.21)" stroke="#a23cd0" stroke-width=".8" opacity=".9"/><ellipse cx="386.75" cy="444.21" rx="13.5" ry="9.4" transform="rotate(-7.82 386.75 444.21)" stroke="#d83088" stroke-width=".8" opacity=".85"/><ellipse cx="401.18" cy="442.23" rx="13" ry="9.8" transform="rotate(-7.82 401.18 442.23)" stroke="#b050e0" stroke-width=".7" opacity=".8"/><ellipse cx="415.60" cy="440.24" rx="15.5" ry="10.6" transform="rotate(-7.82 415.60 440.24)" stroke="#a23cd0" stroke-width=".8" opacity=".9"/><ellipse cx="415.60" cy="440.24" rx="13.5" ry="9.4" transform="rotate(-7.82 415.60 440.24)" stroke="#d83088" stroke-width=".8" opacity=".85"/><ellipse cx="430.03" cy="438.26" rx="13" ry="9.8" transform="rotate(-7.82 430.03 438.26)" stroke="#b050e0" stroke-width=".7" opacity=".8"/><ellipse cx="444.45" cy="436.28" rx="15.5" ry="10.6" transform="rotate(-7.82 444.45 436.28)" stroke="#a23cd0" stroke-width=".8" opacity=".9"/><ellipse cx="444.45" cy="436.28" rx="13.5" ry="9.4" transform="rotate(-7.82 444.45 436.28)" stroke="#d83088" stroke-width=".8" opacity=".85"/><ellipse cx="458.88" cy="434.30" rx="13" ry="9.8" transform="rotate(-7.82 458.88 434.30)" stroke="#b050e0" stroke-width=".7" opacity=".8"/><ellipse cx="473.30" cy="432.32" rx="15.5" ry="10.6" transform="rotate(-7.82 473.30 432.32)" stroke="#a23cd0" stroke-width=".8" opacity=".9"/><ellipse cx="473.30" cy="432.32" rx="13.5" ry="9.4" transform="rotate(-7.82 473.30 432.32)" stroke="#d83088" stroke-width=".8" opacity=".85"/><ellipse cx="487.73" cy="430.33" rx="13" ry="9.8" transform="rotate(-7.82 487.73 430.33)" stroke="#b050e0" stroke-width=".7" opacity=".8"/><ellipse cx="502.15" cy="428.35" rx="15.5" ry="10.6" transform="rotate(-7.82 502.15 428.35)" stroke="#a23cd0" stroke-width=".8" opacity=".9"/><ellipse cx="502.15" cy="428.35" rx="13.5" ry="9.4" transform="rotate(-7.82 502.15 428.35)" stroke="#d83088" stroke-width=".8" opacity=".85"/><ellipse cx="516.58" cy="426.37" rx="13" ry="9.8" transform="rotate(-7.82 516.58 426.37)" stroke="#b050e0" stroke-width=".7" opacity=".8"/><ellipse cx="531.00" cy="424.39" rx="15.5" ry="10.6" transform="rotate(-7.82 531.00 424.39)" stroke="#a23cd0" stroke-width=".8" opacity=".9"/><ellipse cx="531.00" cy="424.39" rx="13.5" ry="9.4" transform="rotate(-7.82 531.00 424.39)" stroke="#d83088" stroke-width=".8" opacity=".85"/><ellipse cx="545.42" cy="422.41" rx="13" ry="9.8" transform="rotate(-7.82 545.42 422.41)" stroke="#b050e0" stroke-width=".7" opacity=".8"/><ellipse cx="559.85" cy="420.42" rx="15.5" ry="10.6" transform="rotate(-7.82 559.85 420.42)" stroke="#a23cd0" stroke-width=".8" opacity=".9"/><ellipse cx="559.85" cy="420.42" rx="13.5" ry="9.4" transform="rotate(-7.82 559.85 420.42)" stroke="#d83088" stroke-width=".8" opacity=".85"/><ellipse cx="574.28" cy="418.44" rx="13" ry="9.8" transform="rotate(-7.82 574.28 418.44)" stroke="#b050e0" stroke-width=".7" opacity=".8"/><ellipse cx="588.70" cy="416.46" rx="15.5" ry="10.6" transform="rotate(-7.82 588.70 416.46)" stroke="#a23cd0" stroke-width=".8" opacity=".9"/><ellipse cx="588.70" cy="416.46" rx="13.5" ry="9.4" transform="rotate(-7.82 588.70 416.46)" stroke="#d83088" stroke-width=".8" opacity=".85"/><ellipse cx="603.12" cy="414.48" rx="13" ry="9.8" transform="rotate(-7.82 603.12 414.48)" stroke="#b050e0" stroke-width=".7" opacity=".8"/><ellipse cx="617.55" cy="412.50" rx="15.5" ry="10.6" transform="rotate(-7.82 617.55 412.50)" stroke="#a23cd0" stroke-width=".8" opacity=".9"/><ellipse cx="617.55" cy="412.50" rx="13.5" ry="9.4" transform="rotate(-7.82 617.55 412.50)" stroke="#d83088" stroke-width=".8" opacity=".85"/><ellipse cx="631.98" cy="410.51" rx="13" ry="9.8" transform="rotate(-7.82 631.98 410.51)" stroke="#b050e0" stroke-width=".7" opacity=".8"/><ellipse cx="646.40" cy="408.53" rx="15.5" ry="10.6" transform="rotate(-7.82 646.40 408.53)" stroke="#a23cd0" stroke-width=".8" opacity=".9"/><ellipse cx="646.40" cy="408.53" rx="13.5" ry="9.4" transform="rotate(-7.82 646.40 408.53)" stroke="#d83088" stroke-width=".8" opacity=".85"/><ellipse cx="660.83" cy="406.55" rx="13" ry="9.8" transform="rotate(-7.82 660.83 406.55)" stroke="#b050e0" stroke-width=".7" opacity=".8"/><path d="M185.20 471.90 L642.00 409.14" stroke="#ec0a26" stroke-width="14.4"/><path d="M179.20 465.89 L180.72 465.48 L182.24 465.05 L183.77 464.61 L185.29 464.19 L186.81 463.81 L188.33 463.50 L189.86 463.26 L191.38 463.10 L192.90 463.00 L194.42 462.97 L195.95 462.97 L197.47 463.00 L198.99 463.01 L200.51 462.99 L202.04 462.91 L203.56 462.77 L205.08 462.55 L206.60 462.26 L208.12 461.90 L209.65 461.50 L211.17 461.06 L212.69 460.62 L214.21 460.21 L215.74 459.83 L217.26 459.52 L218.78 459.29 L220.30 459.13 L221.83 459.04 L223.35 459.00 L224.87 459.01 L226.39 459.03 L227.92 459.04 L229.44 459.02 L230.96 458.95 L232.48 458.80 L234.01 458.58 L235.53 458.28 L237.05 457.92 L238.57 457.51 L240.09 457.07 L241.62 456.64 L243.14 456.22 L244.66 455.85 L246.18 455.55 L247.71 455.31 L249.23 455.16 L250.75 455.07 L252.27 455.04 L253.80 455.05 L255.32 455.07 L256.84 455.08 L258.36 455.06 L259.89 454.98 L261.41 454.83 L262.93 454.60 L264.45 454.30 L265.98 453.94 L267.50 453.53 L269.02 453.09 L270.54 452.65 L272.06 452.24 L273.59 451.87 L275.11 451.57 L276.63 451.34 L278.15 451.19 L279.68 451.10 L281.20 451.08 L282.72 451.09 L284.24 451.11 L285.77 451.12 L287.29 451.09 L288.81 451.01 L290.33 450.85 L291.86 450.62 L293.38 450.32 L294.90 449.95 L296.42 449.54 L297.94 449.10 L299.47 448.67 L300.99 448.25 L302.51 447.89 L304.03 447.59 L305.56 447.37 L307.08 447.22 L308.60 447.14 L310.12 447.11 L311.65 447.12 L313.17 447.14 L314.69 447.15 L316.21 447.12 L317.74 447.04 L319.26 446.88 L320.78 446.65 L322.30 446.34 L323.82 445.97 L325.35 445.55 L326.87 445.12 L328.39 444.68 L329.91 444.27 L331.44 443.91 L332.96 443.61 L334.48 443.39 L336.00 443.25 L337.53 443.17 L339.05 443.15 L340.57 443.16 L342.09 443.18 L343.62 443.19 L345.14 443.16 L346.66 443.07 L348.18 442.91 L349.71 442.67 L351.23 442.36 L352.75 441.99 L354.27 441.57 L355.79 441.13 L357.32 440.70 L358.84 440.29 L360.36 439.93 L361.88 439.64 L363.41 439.42 L364.93 439.28 L366.45 439.20 L367.97 439.18 L369.50 439.20 L371.02 439.22 L372.54 439.22 L374.06 439.19 L375.59 439.10 L377.11 438.93 L378.63 438.69 L380.15 438.38 L381.67 438.00 L383.20 437.58 L384.72 437.15 L386.24 436.71 L387.76 436.31 L389.29 435.95 L390.81 435.66 L392.33 435.45 L393.85 435.31 L395.38 435.24 L396.90 435.22 L398.42 435.23 L399.94 435.26 L401.47 435.26 L402.99 435.22 L404.51 435.13 L406.03 434.96 L407.56 434.71 L409.08 434.40 L410.60 434.02 L412.12 433.60 L413.64 433.16 L415.17 432.73 L416.69 432.32 L418.21 431.97 L419.73 431.69 L421.26 431.47 L422.78 431.34 L424.30 431.27 L425.82 431.26 L427.35 431.27 L428.87 431.29 L430.39 431.29 L431.91 431.25 L433.44 431.16 L434.96 430.98 L436.48 430.74 L438.00 430.42 L439.52 430.04 L441.05 429.61 L442.57 429.17 L444.09 428.74 L445.61 428.34 L447.14 427.99 L448.66 427.71 L450.18 427.50 L451.70 427.37 L453.23 427.31 L454.75 427.29 L456.27 427.31 L457.79 427.33 L459.32 427.33 L460.84 427.29 L462.36 427.18 L463.88 427.01 L465.41 426.76 L466.93 426.43 L468.45 426.05 L469.97 425.63 L471.49 425.19 L473.02 424.76 L474.54 424.36 L476.06 424.01 L477.58 423.73 L479.11 423.53 L480.63 423.40 L482.15 423.34 L483.67 423.33 L485.20 423.35 L486.72 423.37 L488.24 423.36 L489.76 423.32 L491.29 423.21 L492.81 423.03 L494.33 422.78 L495.85 422.45 L497.38 422.07 L498.90 421.64 L500.42 421.20 L501.94 420.77 L503.46 420.38 L504.99 420.03 L506.51 419.76 L508.03 419.56 L509.55 419.43 L511.08 419.37 L512.60 419.36 L514.12 419.38 L515.64 419.40 L517.17 419.40 L518.69 419.35 L520.21 419.24 L521.73 419.06 L523.26 418.80 L524.78 418.47 L526.30 418.08 L527.82 417.66 L529.34 417.22 L530.87 416.79 L532.39 416.39 L533.91 416.05 L535.43 415.78 L536.96 415.59 L538.48 415.47 L540.00 415.41 L541.52 415.40 L543.05 415.42 L544.57 415.44 L546.09 415.43 L547.61 415.38 L549.14 415.27 L550.66 415.08 L552.18 414.82 L553.70 414.49 L555.23 414.10 L556.75 413.67 L558.27 413.23 L559.79 412.80 L561.31 412.41 L562.84 412.07 L564.36 411.81 L565.88 411.61 L567.40 411.50 L568.93 411.44 L570.45 411.44 L571.97 411.46 L573.49 411.48 L575.02 411.47 L576.54 411.42 L578.06 411.30 L579.58 411.11 L581.11 410.84 L582.63 410.51 L584.15 410.11 L585.67 409.69 L587.19 409.25 L588.72 408.82 L590.24 408.43 L591.76 408.09 L593.28 407.83 L594.81 407.64 L596.33 407.53 L597.85 407.48 L599.37 407.47 L600.90 407.49 L602.42 407.51 L603.94 407.50 L605.46 407.45 L606.99 407.33 L608.51 407.13 L610.03 406.86 L611.55 406.52 L613.08 406.13 L614.60 405.70 L616.12 405.26 L617.64 404.83 L619.16 404.45 L620.69 404.12 L622.21 403.86 L623.73 403.67 L625.25 403.56 L626.78 403.51 L628.30 403.51 L629.82 403.53 L631.34 403.55 L632.87 403.54 L634.39 403.48 L635.91 403.36 L637.43 403.16 L638.96 402.88 L640.48 402.54 L642.00 402.15" stroke="#e8102e" stroke-width="1.2" opacity="1"/><path d="M179.20 479.54 L180.72 479.52 L182.24 479.54 L183.77 479.56 L185.29 479.56 L186.81 479.53 L188.33 479.43 L189.86 479.26 L191.38 479.02 L192.90 478.70 L194.42 478.32 L195.95 477.90 L197.47 477.46 L198.99 477.03 L200.51 476.62 L202.04 476.27 L203.56 475.99 L205.08 475.78 L206.60 475.64 L208.12 475.58 L209.65 475.56 L211.17 475.57 L212.69 475.60 L214.21 475.60 L215.74 475.56 L217.26 475.46 L218.78 475.29 L220.30 475.04 L221.83 474.72 L223.35 474.34 L224.87 473.92 L226.39 473.48 L227.92 473.04 L229.44 472.64 L230.96 472.29 L232.48 472.01 L234.01 471.81 L235.53 471.67 L237.05 471.61 L238.57 471.60 L240.09 471.61 L241.62 471.63 L243.14 471.63 L244.66 471.59 L246.18 471.49 L247.71 471.31 L249.23 471.06 L250.75 470.74 L252.27 470.35 L253.80 469.93 L255.32 469.49 L256.84 469.06 L258.36 468.66 L259.89 468.31 L261.41 468.04 L262.93 467.83 L264.45 467.71 L265.98 467.64 L267.50 467.63 L269.02 467.65 L270.54 467.67 L272.06 467.67 L273.59 467.62 L275.11 467.52 L276.63 467.34 L278.15 467.08 L279.68 466.75 L281.20 466.37 L282.72 465.94 L284.24 465.50 L285.77 465.07 L287.29 464.68 L288.81 464.33 L290.33 464.06 L291.86 463.86 L293.38 463.74 L294.90 463.68 L296.42 463.67 L297.94 463.69 L299.47 463.71 L300.99 463.70 L302.51 463.66 L304.03 463.55 L305.56 463.36 L307.08 463.10 L308.60 462.77 L310.12 462.38 L311.65 461.96 L313.17 461.52 L314.69 461.09 L316.21 460.69 L317.74 460.35 L319.26 460.08 L320.78 459.89 L322.30 459.77 L323.82 459.71 L325.35 459.71 L326.87 459.72 L328.39 459.74 L329.91 459.74 L331.44 459.69 L332.96 459.57 L334.48 459.39 L336.00 459.12 L337.53 458.79 L339.05 458.40 L340.57 457.97 L342.09 457.53 L343.62 457.10 L345.14 456.71 L346.66 456.38 L348.18 456.11 L349.71 455.92 L351.23 455.80 L352.75 455.75 L354.27 455.74 L355.79 455.76 L357.32 455.78 L358.84 455.77 L360.36 455.72 L361.88 455.60 L363.41 455.41 L364.93 455.14 L366.45 454.81 L367.97 454.42 L369.50 453.99 L371.02 453.55 L372.54 453.12 L374.06 452.73 L375.59 452.40 L377.11 452.13 L378.63 451.95 L380.15 451.83 L381.67 451.78 L383.20 451.78 L384.72 451.80 L386.24 451.82 L387.76 451.81 L389.29 451.75 L390.81 451.63 L392.33 451.44 L393.85 451.17 L395.38 450.83 L396.90 450.43 L398.42 450.00 L399.94 449.56 L401.47 449.14 L402.99 448.75 L404.51 448.42 L406.03 448.16 L407.56 447.98 L409.08 447.86 L410.60 447.82 L412.12 447.81 L413.64 447.83 L415.17 447.85 L416.69 447.84 L418.21 447.78 L419.73 447.66 L421.26 447.46 L422.78 447.19 L424.30 446.84 L425.82 446.45 L427.35 446.02 L428.87 445.58 L430.39 445.15 L431.91 444.77 L433.44 444.44 L434.96 444.18 L436.48 444.00 L438.00 443.90 L439.52 443.85 L441.05 443.85 L442.57 443.87 L444.09 443.89 L445.61 443.88 L447.14 443.81 L448.66 443.69 L450.18 443.49 L451.70 443.21 L453.23 442.86 L454.75 442.46 L456.27 442.03 L457.79 441.59 L459.32 441.17 L460.84 440.79 L462.36 440.46 L463.88 440.21 L465.41 440.03 L466.93 439.93 L468.45 439.89 L469.97 439.89 L471.49 439.91 L473.02 439.92 L474.54 439.91 L476.06 439.85 L477.58 439.72 L479.11 439.51 L480.63 439.23 L482.15 438.88 L483.67 438.48 L485.20 438.05 L486.72 437.61 L488.24 437.18 L489.76 436.80 L491.29 436.48 L492.81 436.23 L494.33 436.06 L495.85 435.96 L497.38 435.92 L498.90 435.92 L500.42 435.95 L501.94 435.96 L503.46 435.94 L504.99 435.88 L506.51 435.74 L508.03 435.53 L509.55 435.25 L511.08 434.90 L512.60 434.49 L514.12 434.06 L515.64 433.62 L517.17 433.20 L518.69 432.82 L520.21 432.51 L521.73 432.26 L523.26 432.09 L524.78 432.00 L526.30 431.96 L527.82 431.96 L529.34 431.98 L530.87 432.00 L532.39 431.98 L533.91 431.91 L535.43 431.77 L536.96 431.56 L538.48 431.27 L540.00 430.91 L541.52 430.51 L543.05 430.07 L544.57 429.63 L546.09 429.22 L547.61 428.84 L549.14 428.53 L550.66 428.29 L552.18 428.12 L553.70 428.03 L555.23 427.99 L556.75 428.00 L558.27 428.02 L559.79 428.03 L561.31 428.01 L562.84 427.94 L564.36 427.80 L565.88 427.58 L567.40 427.29 L568.93 426.93 L570.45 426.52 L571.97 426.09 L573.49 425.65 L575.02 425.23 L576.54 424.86 L578.06 424.55 L579.58 424.31 L581.11 424.15 L582.63 424.06 L584.15 424.03 L585.67 424.04 L587.19 424.06 L588.72 424.07 L590.24 424.05 L591.76 423.97 L593.28 423.82 L594.81 423.60 L596.33 423.31 L597.85 422.95 L599.37 422.54 L600.90 422.10 L602.42 421.66 L603.94 421.25 L605.46 420.88 L606.99 420.57 L608.51 420.34 L610.03 420.18 L611.55 420.09 L613.08 420.06 L614.60 420.07 L616.12 420.09 L617.64 420.10 L619.16 420.08 L620.69 420.00 L622.21 419.85 L623.73 419.63 L625.25 419.33 L626.78 418.96 L628.30 418.55 L629.82 418.12 L631.34 417.68 L632.87 417.27 L634.39 416.90 L635.91 416.60 L637.43 416.37 L638.96 416.21 L640.48 416.13 L642.00 416.10" stroke="#e8102e" stroke-width="1.2" opacity="1"/><path d="M185.20 471.90 L642.00 409.14" stroke="#00f066" stroke-width="10"/><path d="M185.20 471.90 L642.00 409.14" stroke="#86f6e2" stroke-width="6.2"/><path d="M185.20 471.90 L642.00 409.14" stroke="#f0602c" stroke-width="3.6"/><path d="M185.20 471.90 L642.00 409.14" stroke="#ffd2ac" stroke-width="2.0"/><path d="M190.80 471.13 L207.65 468.82" stroke="#2414c4" stroke-width="2.0" stroke-linecap="butt"/><path d="M219.65 467.17 L236.50 464.85" stroke="#2414c4" stroke-width="2.0" stroke-linecap="butt"/><path d="M248.50 463.20 L265.35 460.89" stroke="#2414c4" stroke-width="2.0" stroke-linecap="butt"/><path d="M277.35 459.24 L294.20 456.92" stroke="#2414c4" stroke-width="2.0" stroke-linecap="butt"/><path d="M306.20 455.27 L323.05 452.96" stroke="#2414c4" stroke-width="2.0" stroke-linecap="butt"/><path d="M335.05 451.31 L351.90 449.00" stroke="#2414c4" stroke-width="2.0" stroke-linecap="butt"/><path d="M363.90 447.35 L380.75 445.03" stroke="#2414c4" stroke-width="2.0" stroke-linecap="butt"/><path d="M392.75 443.38 L409.60 441.07" stroke="#2414c4" stroke-width="2.0" stroke-linecap="butt"/><path d="M421.60 439.42 L438.45 437.10" stroke="#2414c4" stroke-width="2.0" stroke-linecap="butt"/><path d="M450.45 435.45 L467.30 433.14" stroke="#2414c4" stroke-width="2.0" stroke-linecap="butt"/><path d="M479.30 431.49 L496.15 429.18" stroke="#2414c4" stroke-width="2.0" stroke-linecap="butt"/><path d="M508.15 427.53 L525.00 425.21" stroke="#2414c4" stroke-width="2.0" stroke-linecap="butt"/><path d="M537.00 423.56 L553.85 421.25" stroke="#2414c4" stroke-width="2.0" stroke-linecap="butt"/><path d="M565.85 419.60 L582.70 417.28" stroke="#2414c4" stroke-width="2.0" stroke-linecap="butt"/><path d="M594.70 415.63 L611.55 413.32" stroke="#2414c4" stroke-width="2.0" stroke-linecap="butt"/><path d="M623.55 411.67 L640.40 409.36" stroke="#2414c4" stroke-width="2.0" stroke-linecap="butt"/><ellipse cx="184.80" cy="471.95" rx="4.2" ry="1.9" transform="rotate(-3.91 184.80 471.95)" fill="#ffe9d6" stroke="#f07a40" stroke-width="0.9"/><ellipse cx="184.80" cy="471.95" rx="2.8" ry="1.3" fill="#fff"/><ellipse cx="213.65" cy="467.99" rx="4.2" ry="1.9" transform="rotate(-3.91 213.65 467.99)" fill="#ffe9d6" stroke="#f07a40" stroke-width="0.9"/><ellipse cx="213.65" cy="467.99" rx="2.8" ry="1.3" fill="#fff"/><ellipse cx="242.50" cy="464.03" rx="4.2" ry="1.9" transform="rotate(-3.91 242.50 464.03)" fill="#ffe9d6" stroke="#f07a40" stroke-width="0.9"/><ellipse cx="242.50" cy="464.03" rx="2.8" ry="1.3" fill="#fff"/><ellipse cx="271.35" cy="460.06" rx="4.2" ry="1.9" transform="rotate(-3.91 271.35 460.06)" fill="#ffe9d6" stroke="#f07a40" stroke-width="0.9"/><ellipse cx="271.35" cy="460.06" rx="2.8" ry="1.3" fill="#fff"/><ellipse cx="300.20" cy="456.10" rx="4.2" ry="1.9" transform="rotate(-3.91 300.20 456.10)" fill="#ffe9d6" stroke="#f07a40" stroke-width="0.9"/><ellipse cx="300.20" cy="456.10" rx="2.8" ry="1.3" fill="#fff"/><ellipse cx="329.05" cy="452.14" rx="4.2" ry="1.9" transform="rotate(-3.91 329.05 452.14)" fill="#ffe9d6" stroke="#f07a40" stroke-width="0.9"/><ellipse cx="329.05" cy="452.14" rx="2.8" ry="1.3" fill="#fff"/><ellipse cx="357.90" cy="448.17" rx="4.2" ry="1.9" transform="rotate(-3.91 357.90 448.17)" fill="#ffe9d6" stroke="#f07a40" stroke-width="0.9"/><ellipse cx="357.90" cy="448.17" rx="2.8" ry="1.3" fill="#fff"/><ellipse cx="386.75" cy="444.21" rx="4.2" ry="1.9" transform="rotate(-3.91 386.75 444.21)" fill="#ffe9d6" stroke="#f07a40" stroke-width="0.9"/><ellipse cx="386.75" cy="444.21" rx="2.8" ry="1.3" fill="#fff"/><ellipse cx="415.60" cy="440.24" rx="4.2" ry="1.9" transform="rotate(-3.91 415.60 440.24)" fill="#ffe9d6" stroke="#f07a40" stroke-width="0.9"/><ellipse cx="415.60" cy="440.24" rx="2.8" ry="1.3" fill="#fff"/><ellipse cx="444.45" cy="436.28" rx="4.2" ry="1.9" transform="rotate(-3.91 444.45 436.28)" fill="#ffe9d6" stroke="#f07a40" stroke-width="0.9"/><ellipse cx="444.45" cy="436.28" rx="2.8" ry="1.3" fill="#fff"/><ellipse cx="473.30" cy="432.32" rx="4.2" ry="1.9" transform="rotate(-3.91 473.30 432.32)" fill="#ffe9d6" stroke="#f07a40" stroke-width="0.9"/><ellipse cx="473.30" cy="432.32" rx="2.8" ry="1.3" fill="#fff"/><ellipse cx="502.15" cy="428.35" rx="4.2" ry="1.9" transform="rotate(-3.91 502.15 428.35)" fill="#ffe9d6" stroke="#f07a40" stroke-width="0.9"/><ellipse cx="502.15" cy="428.35" rx="2.8" ry="1.3" fill="#fff"/><ellipse cx="531.00" cy="424.39" rx="4.2" ry="1.9" transform="rotate(-3.91 531.00 424.39)" fill="#ffe9d6" stroke="#f07a40" stroke-width="0.9"/><ellipse cx="531.00" cy="424.39" rx="2.8" ry="1.3" fill="#fff"/><ellipse cx="559.85" cy="420.42" rx="4.2" ry="1.9" transform="rotate(-3.91 559.85 420.42)" fill="#ffe9d6" stroke="#f07a40" stroke-width="0.9"/><ellipse cx="559.85" cy="420.42" rx="2.8" ry="1.3" fill="#fff"/><ellipse cx="588.70" cy="416.46" rx="4.2" ry="1.9" transform="rotate(-3.91 588.70 416.46)" fill="#ffe9d6" stroke="#f07a40" stroke-width="0.9"/><ellipse cx="588.70" cy="416.46" rx="2.8" ry="1.3" fill="#fff"/><ellipse cx="617.55" cy="412.50" rx="4.2" ry="1.9" transform="rotate(-3.91 617.55 412.50)" fill="#ffe9d6" stroke="#f07a40" stroke-width="0.9"/><ellipse cx="617.55" cy="412.50" rx="2.8" ry="1.3" fill="#fff"/></g><path d="M178.6 216.3 H636.0 V478.2" fill="none" stroke="#585858" stroke-width="1.2"/><path d="M178.6 478.2 V215.7" fill="none" stroke="#333" stroke-width="1.3"/><path d="M178.0 478.2 H636.6" stroke="#3c3c3c" stroke-width="1"/><text x="141.66 146.02 150.38 154.74 159.10 163.46 167.82" y="481.0" text-anchor="middle" font-size="8.3" fill="#2a2a2a">0.00e+0</text><path d="M174.4 478.0 H178.6" stroke="#333" stroke-width="1"/><text x="141.66 146.02 150.38 154.74 159.10 163.46 167.82" y="447.4" text-anchor="middle" font-size="8.3" fill="#2a2a2a">5.00e+2</text><path d="M174.4 444.4 H178.6" stroke="#333" stroke-width="1"/><text x="141.66 146.02 150.38 154.74 159.10 163.46 167.82" y="413.9" text-anchor="middle" font-size="8.3" fill="#2a2a2a">1.00e+3</text><path d="M174.4 410.9 H178.6" stroke="#333" stroke-width="1"/><text x="141.66 146.02 150.38 154.74 159.10 163.46 167.82" y="380.3" text-anchor="middle" font-size="8.3" fill="#2a2a2a">1.50e+3</text><path d="M174.4 377.3 H178.6" stroke="#333" stroke-width="1"/><text x="141.66 146.02 150.38 154.74 159.10 163.46 167.82" y="346.7" text-anchor="middle" font-size="8.3" fill="#2a2a2a">2.00e+3</text><path d="M174.4 343.7 H178.6" stroke="#333" stroke-width="1"/><text x="141.66 146.02 150.38 154.74 159.10 163.46 167.82" y="313.1" text-anchor="middle" font-size="8.3" fill="#2a2a2a">2.50e+3</text><path d="M174.4 310.1 H178.6" stroke="#333" stroke-width="1"/><text x="141.66 146.02 150.38 154.74 159.10 163.46 167.82" y="279.6" text-anchor="middle" font-size="8.3" fill="#2a2a2a">3.00e+3</text><path d="M174.4 276.6 H178.6" stroke="#333" stroke-width="1"/><text x="141.66 146.02 150.38 154.74 159.10 163.46 167.82" y="246.0" text-anchor="middle" font-size="8.3" fill="#2a2a2a">3.50e+3</text><path d="M174.4 243.0 H178.6" stroke="#333" stroke-width="1"/><text x="216.26 220.62 224.98 229.34" y="489.2" text-anchor="middle" font-size="8.3" fill="#2a2a2a">0.33</text><path d="M224.4 478.2 V481.8" stroke="#333" stroke-width="1"/><text x="262.16 266.52 270.88 275.24" y="489.2" text-anchor="middle" font-size="8.3" fill="#2a2a2a">0.66</text><path d="M270.3 478.2 V481.8" stroke="#333" stroke-width="1"/><text x="308.06 312.42 316.78 321.14" y="489.2" text-anchor="middle" font-size="8.3" fill="#2a2a2a">0.99</text><path d="M316.2 478.2 V481.8" stroke="#333" stroke-width="1"/><text x="353.96 358.32 362.68 367.04" y="489.2" text-anchor="middle" font-size="8.3" fill="#2a2a2a">1.32</text><path d="M362.1 478.2 V481.8" stroke="#333" stroke-width="1"/><text x="399.86 404.22 408.58 412.94" y="489.2" text-anchor="middle" font-size="8.3" fill="#2a2a2a">1.65</text><path d="M408.0 478.2 V481.8" stroke="#333" stroke-width="1"/><text x="445.76 450.12 454.48 458.84" y="489.2" text-anchor="middle" font-size="8.3" fill="#2a2a2a">1.98</text><path d="M453.9 478.2 V481.8" stroke="#333" stroke-width="1"/><text x="491.66 496.02 500.38 504.74" y="489.2" text-anchor="middle" font-size="8.3" fill="#2a2a2a">2.31</text><path d="M499.8 478.2 V481.8" stroke="#333" stroke-width="1"/><text x="537.56 541.92 546.28 550.64" y="489.2" text-anchor="middle" font-size="8.3" fill="#2a2a2a">2.64</text><path d="M545.7 478.2 V481.8" stroke="#333" stroke-width="1"/><text x="583.46 587.82 592.18 596.54" y="489.2" text-anchor="middle" font-size="8.3" fill="#2a2a2a">2.97</text><path d="M591.6 478.2 V481.8" stroke="#333" stroke-width="1"/></svg></div></body></html>
